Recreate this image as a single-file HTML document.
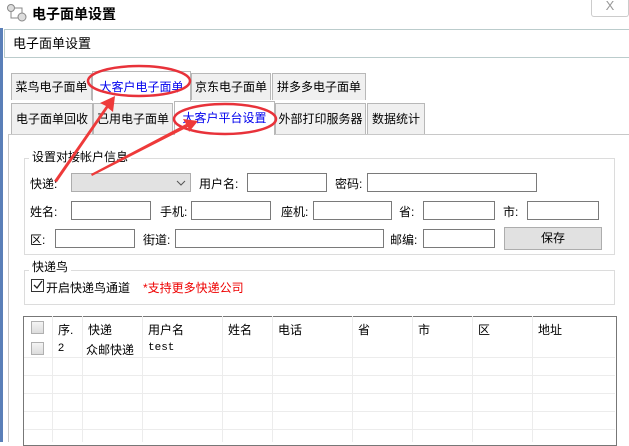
<!DOCTYPE html>
<html><head><meta charset="utf-8"><style>
*{margin:0;padding:0;box-sizing:border-box}
body{width:629px;height:442px;overflow:hidden;background:#fff;font-family:"Liberation Sans","Noto Sans CJK SC","WenQuanYi Zen Hei",sans-serif;font-size:12px;color:#000;position:relative}
.a{position:absolute;white-space:nowrap}
.in{position:absolute;border:1px solid #7a7a7a;background:#fff;height:19px}
.tab{position:absolute;border:1px solid #b8b8b8;border-bottom:none;background:#f0f0f0;text-align:center;line-height:26px;white-space:nowrap;overflow:hidden}
.vl{position:absolute;top:316px;bottom:0;width:1px;background:#ececec}
.hl{position:absolute;left:24px;width:591px;height:1px;background:#ececec}
.cb{position:absolute;width:13px;height:13px;border:1px solid #b0b0b0;background:linear-gradient(#f4f4f4,#dcdcdc)}
</style></head><body>
<div class="a" style="left:0;top:28px;width:3px;height:414px;background:#5a7fb8"></div>
<svg class="a" style="left:6px;top:3px" width="22" height="20"><circle cx="5" cy="5" r="3.5" fill="#ddd" stroke="#888"/><circle cx="16" cy="14" r="4" fill="#ddd" stroke="#888"/><path d="M5 9v6h7M9 5h7v5" stroke="#888" fill="none"/></svg>
<div class="a" style="left:32px;top:4px;font-weight:bold;font-size:14px">电子面单设置</div>
<div class="a" style="left:591px;top:-1px;width:38px;height:18px;border:1px solid #ccc;border-top:none;border-radius:0 0 3px 3px;text-align:center;color:#999;line-height:14px;font-size:13px">X</div>
<div class="a" style="left:4px;top:29px;width:625px;height:29px;border:1px solid #bcc;border-right:none;line-height:27px;padding-left:8px;font-size:13px">电子面单设置</div>
<div class="tab" style="left:11px;top:73px;width:81px;height:27px">菜鸟电子面单</div>
<div class="tab" style="left:92px;top:71px;width:99px;height:30px;background:#fff;color:#0000ee;line-height:30px">大客户电子面单</div>
<div class="tab" style="left:191px;top:73px;width:80px;height:27px">京东电子面单</div>
<div class="tab" style="left:272px;top:73px;width:94px;height:27px">拼多多电子面单</div>
<div class="tab" style="left:11px;top:103px;width:82px;height:31px;line-height:30px">电子面单回收</div>
<div class="tab" style="left:93px;top:103px;width:80px;height:31px;line-height:30px">已用电子面单</div>
<div class="tab" style="left:174px;top:101px;width:101px;height:34px;background:#fff;color:#0000ee;line-height:32px;z-index:2">大客户平台设置</div>
<div class="tab" style="left:275px;top:103px;width:91px;height:31px;line-height:30px">外部打印服务器</div>
<div class="tab" style="left:367px;top:103px;width:58px;height:31px;line-height:30px">数据统计</div>
<div class="a" style="left:8px;top:134px;width:621px;height:308px;border:1px solid #c8c8c8;border-right:none;border-bottom:none"></div>
<div class="a" style="left:24px;top:158px;width:591px;height:97px;border:1px solid #dcdcdc"></div>
<div class="a" style="left:29px;top:148px;background:#fff;padding:0 3px">设置对接帐户信息</div>
<div class="a" style="left:30px;top:175px">快递:</div>
<div class="in" style="left:71px;top:173px;width:120px;background:#e2e2e2;border-color:#adadad"><svg class="a" style="left:104px;top:6px" width="10" height="7"><path d="M1 1l4 4 4-4" stroke="#555" fill="none"/></svg></div>
<div class="a" style="left:199px;top:175px">用户名:</div><div class="in" style="left:247px;top:173px;width:80px"></div>
<div class="a" style="left:335px;top:175px">密码:</div><div class="in" style="left:367px;top:173px;width:170px"></div>
<div class="a" style="left:30px;top:203px">姓名:</div><div class="in" style="left:71px;top:201px;width:80px"></div>
<div class="a" style="left:160px;top:203px">手机:</div><div class="in" style="left:191px;top:201px;width:80px"></div>
<div class="a" style="left:281px;top:203px">座机:</div><div class="in" style="left:313px;top:201px;width:79px"></div>
<div class="a" style="left:399px;top:203px">省:</div><div class="in" style="left:423px;top:201px;width:72px"></div>
<div class="a" style="left:503px;top:203px">市:</div><div class="in" style="left:527px;top:201px;width:72px"></div>
<div class="a" style="left:30px;top:231px">区:</div><div class="in" style="left:55px;top:229px;width:80px"></div>
<div class="a" style="left:143px;top:231px">街道:</div><div class="in" style="left:175px;top:229px;width:209px"></div>
<div class="a" style="left:390px;top:231px">邮编:</div><div class="in" style="left:423px;top:229px;width:72px"></div>
<div class="a" style="left:504px;top:227px;width:98px;height:23px;border:1px solid #adadad;background:#e1e1e1;text-align:center;line-height:21px">保存</div>
<div class="a" style="left:24px;top:270px;width:591px;height:35px;border:1px solid #dcdcdc"></div>
<div class="a" style="left:29px;top:258px;background:#fff;padding:0 3px">快递鸟</div>
<div class="a" style="left:31px;top:279px;width:13px;height:13px;border:1px solid #333;background:#fff"><svg width="11" height="11" style="position:absolute;left:0;top:0"><path d="M2 5l3 3 5-7" stroke="#222" stroke-width="1.3" fill="none"/></svg></div>
<div class="a" style="left:46px;top:279px">开启快递鸟通道</div>
<div class="a" style="left:143px;top:279px;color:#e00">*支持更多快递公司</div>
<div class="a" style="left:23px;top:316px;width:594px;height:130px;border:1px solid #777"></div>
<div class="vl" style="left:52px"></div><div class="vl" style="left:82px"></div><div class="vl" style="left:142px"></div><div class="vl" style="left:222px"></div><div class="vl" style="left:272px"></div><div class="vl" style="left:352px"></div><div class="vl" style="left:412px"></div><div class="vl" style="left:472px"></div><div class="vl" style="left:532px"></div>
<div class="hl" style="top:357px"></div><div class="hl" style="top:375px"></div><div class="hl" style="top:393px"></div><div class="hl" style="top:411px"></div><div class="hl" style="top:429px"></div>
<div class="cb" style="left:31px;top:321px"></div><div class="cb" style="left:31px;top:342px"></div>
<div class="a" style="left:58px;top:321px">序.</div><div class="a" style="left:88px;top:321px">快递</div><div class="a" style="left:148px;top:321px">用户名</div><div class="a" style="left:228px;top:321px">姓名</div><div class="a" style="left:278px;top:321px">电话</div><div class="a" style="left:358px;top:321px">省</div><div class="a" style="left:418px;top:321px">市</div><div class="a" style="left:478px;top:321px">区</div><div class="a" style="left:538px;top:321px">地址</div>
<div class="a" style="left:58px;top:342px;font-size:11px">2</div><div class="a" style="left:86px;top:341px">众邮快递</div><div class="a" style="left:148px;top:342px;font-family:'Liberation Mono',monospace;font-size:11px">test</div>
<svg class="a" style="left:0;top:0;z-index:5" width="629" height="442">
<ellipse cx="139" cy="81" rx="51" ry="15" fill="none" stroke="#e8323a" stroke-width="2.5"/>
<ellipse cx="225" cy="119" rx="51" ry="15" fill="none" stroke="#e8323a" stroke-width="2.5"/>
<polygon points="54,181 106,106 100,103 115,96 113,112 108,108 57,182" fill="#ee3a3a"/>
<polygon points="91,174 186,124 183,119 198,121 189,132 188,127 92,176" fill="#ee3a3a"/>
</svg>
</body></html>
